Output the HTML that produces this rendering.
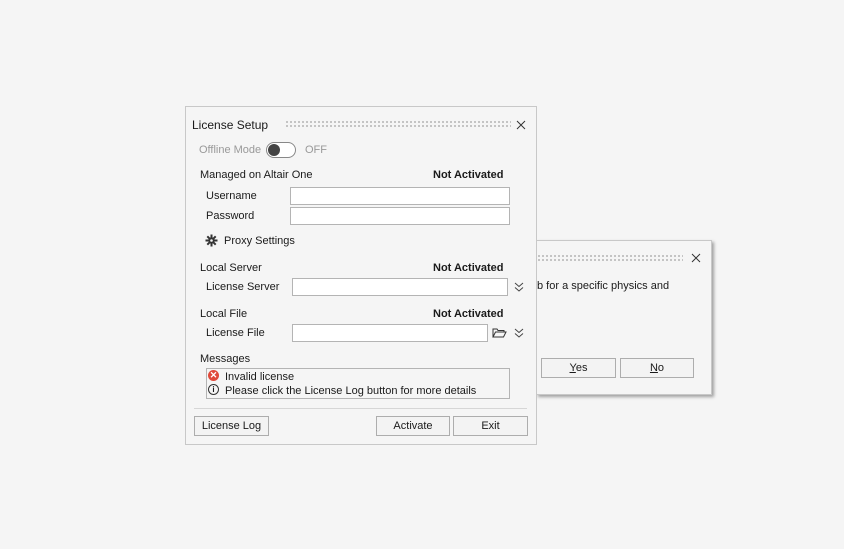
<!DOCTYPE html>
<html><head><style>
body{margin:0;width:844px;height:549px;background:#f5f5f5;position:relative;overflow:hidden;font-family:"Liberation Sans",sans-serif;font-size:11px;color:#1a1a1a}
.a{position:absolute;white-space:nowrap}
.dots{position:absolute;height:8px;background-image:radial-gradient(circle,#999 0.7px,transparent 0.9px);background-size:4px 4px}
.inp{position:absolute;background:#fff;border:1px solid #b4b4b4;box-sizing:border-box}
.btn{position:absolute;background:#f3f3f3;border:1px solid #adadad;box-sizing:border-box;text-align:center;line-height:18px}
.b{font-weight:bold}
</style></head><body>
<!-- back dialog -->
<div class="a" style="left:536px;top:240px;width:175px;height:153px;background:#f5f5f5;border:1px solid #c8c8c8;border-left:none;box-shadow:2px 2px 3px rgba(0,0,0,.35)"></div>
<div class="dots" style="left:537px;top:254px;width:146px"></div>
<svg class="a" style="left:691px;top:253px" width="10" height="10"><path d="M1 1l8 8M9 1l-8 8" stroke="#333"/></svg>
<div class="a" style="left:537px;top:280px">b for a specific physics and</div>
<div class="btn" style="left:541px;top:358px;width:75px;height:20px"><u>Y</u>es</div>
<div class="btn" style="left:620px;top:358px;width:74px;height:20px"><u>N</u>o</div>
<!-- main dialog -->
<div class="a" style="left:185px;top:106px;width:350px;height:337px;background:#f5f5f5;border:1px solid #c8c8c8"></div>
<div class="a" style="left:192px;top:118px;font-size:12px">License Setup</div>
<div class="dots" style="left:285px;top:120px;width:226px"></div>
<svg class="a" style="left:516px;top:120px" width="10" height="10"><path d="M1 1l8 8M9 1l-8 8" stroke="#333"/></svg>
<div class="a" style="left:199px;top:144px;color:#999">Offline Mode</div>
<div class="a" style="left:266px;top:142px;width:30px;height:16px;border:1px solid #888;border-radius:8px;background:#fff;box-sizing:border-box"></div>
<div class="a" style="left:268px;top:144px;width:12px;height:12px;border-radius:50%;background:#444"></div>
<div class="a" style="left:305px;top:144px;color:#999">OFF</div>
<div class="a" style="left:200px;top:169px">Managed on Altair One</div>
<div class="a b" style="left:433px;top:169px">Not Activated</div>
<div class="a" style="left:206px;top:190px">Username</div>
<div class="inp" style="left:290px;top:187px;width:220px;height:18px"></div>
<div class="a" style="left:206px;top:210px">Password</div>
<div class="inp" style="left:290px;top:207px;width:220px;height:18px"></div>
<svg class="a" style="left:205px;top:234px" width="13" height="13" viewBox="0 0 13 13"><path d="M6.5 0.5v3M6.5 9.5v3M0.5 6.5h3M9.5 6.5h3M2.3 2.3l2.1 2.1M8.6 8.6l2.1 2.1M2.3 10.7l2.1-2.1M8.6 4.4l2.1-2.1" stroke="#333" stroke-width="2"/><circle cx="6.5" cy="6.5" r="3.2" fill="#333"/><circle cx="6.5" cy="6.5" r="1.3" fill="#f5f5f5"/></svg>
<div class="a" style="left:224px;top:235px">Proxy Settings</div>
<div class="a" style="left:200px;top:262px">Local Server</div>
<div class="a b" style="left:433px;top:262px">Not Activated</div>
<div class="a" style="left:206px;top:281px">License Server</div>
<div class="inp" style="left:292px;top:278px;width:216px;height:18px"></div>
<svg class="a" style="left:513px;top:281px" width="12" height="12"><path d="M2 2l4 3.5 4-3.5M2 6.5l4 3.5 4-3.5" stroke="#444" fill="none"/></svg>
<div class="a" style="left:200px;top:308px">Local File</div>
<div class="a b" style="left:433px;top:308px">Not Activated</div>
<div class="a" style="left:206px;top:327px">License File</div>
<div class="inp" style="left:292px;top:324px;width:196px;height:18px"></div>
<svg class="a" style="left:492px;top:327px" width="16" height="12"><path d="M1 10V2h4l1 1.5h6V5M1 10l2.5-5H14l-2.5 5z" stroke="#333" fill="none"/></svg>
<svg class="a" style="left:513px;top:327px" width="12" height="12"><path d="M2 2l4 3.5 4-3.5M2 6.5l4 3.5 4-3.5" stroke="#444" fill="none"/></svg>
<div class="a" style="left:200px;top:353px">Messages</div>
<div class="inp" style="left:206px;top:368px;width:304px;height:31px;background:#f5f5f5"></div>
<div class="a" style="left:208px;top:370px;width:11px;height:11px;border-radius:50%;background:#e04a3a;color:#fff;font-size:9px;line-height:11px;text-align:center;font-weight:bold">✕</div>
<div class="a" style="left:225px;top:371px">Invalid license</div>
<div class="a" style="left:208px;top:384px;width:9px;height:9px;border-radius:50%;border:1px solid #333;font-size:8px;line-height:9px;text-align:center;font-weight:bold">i</div>
<div class="a" style="left:225px;top:385px">Please click the License Log button for more details</div>
<div class="a" style="left:194px;top:408px;width:333px;height:1px;background:#d6d6d6"></div>
<div class="btn" style="left:194px;top:416px;width:75px;height:20px;line-height:19px">License Log</div>
<div class="btn" style="left:376px;top:416px;width:74px;height:20px;line-height:19px">Activate</div>
<div class="btn" style="left:453px;top:416px;width:75px;height:20px;line-height:19px">Exit</div>
</body></html>
